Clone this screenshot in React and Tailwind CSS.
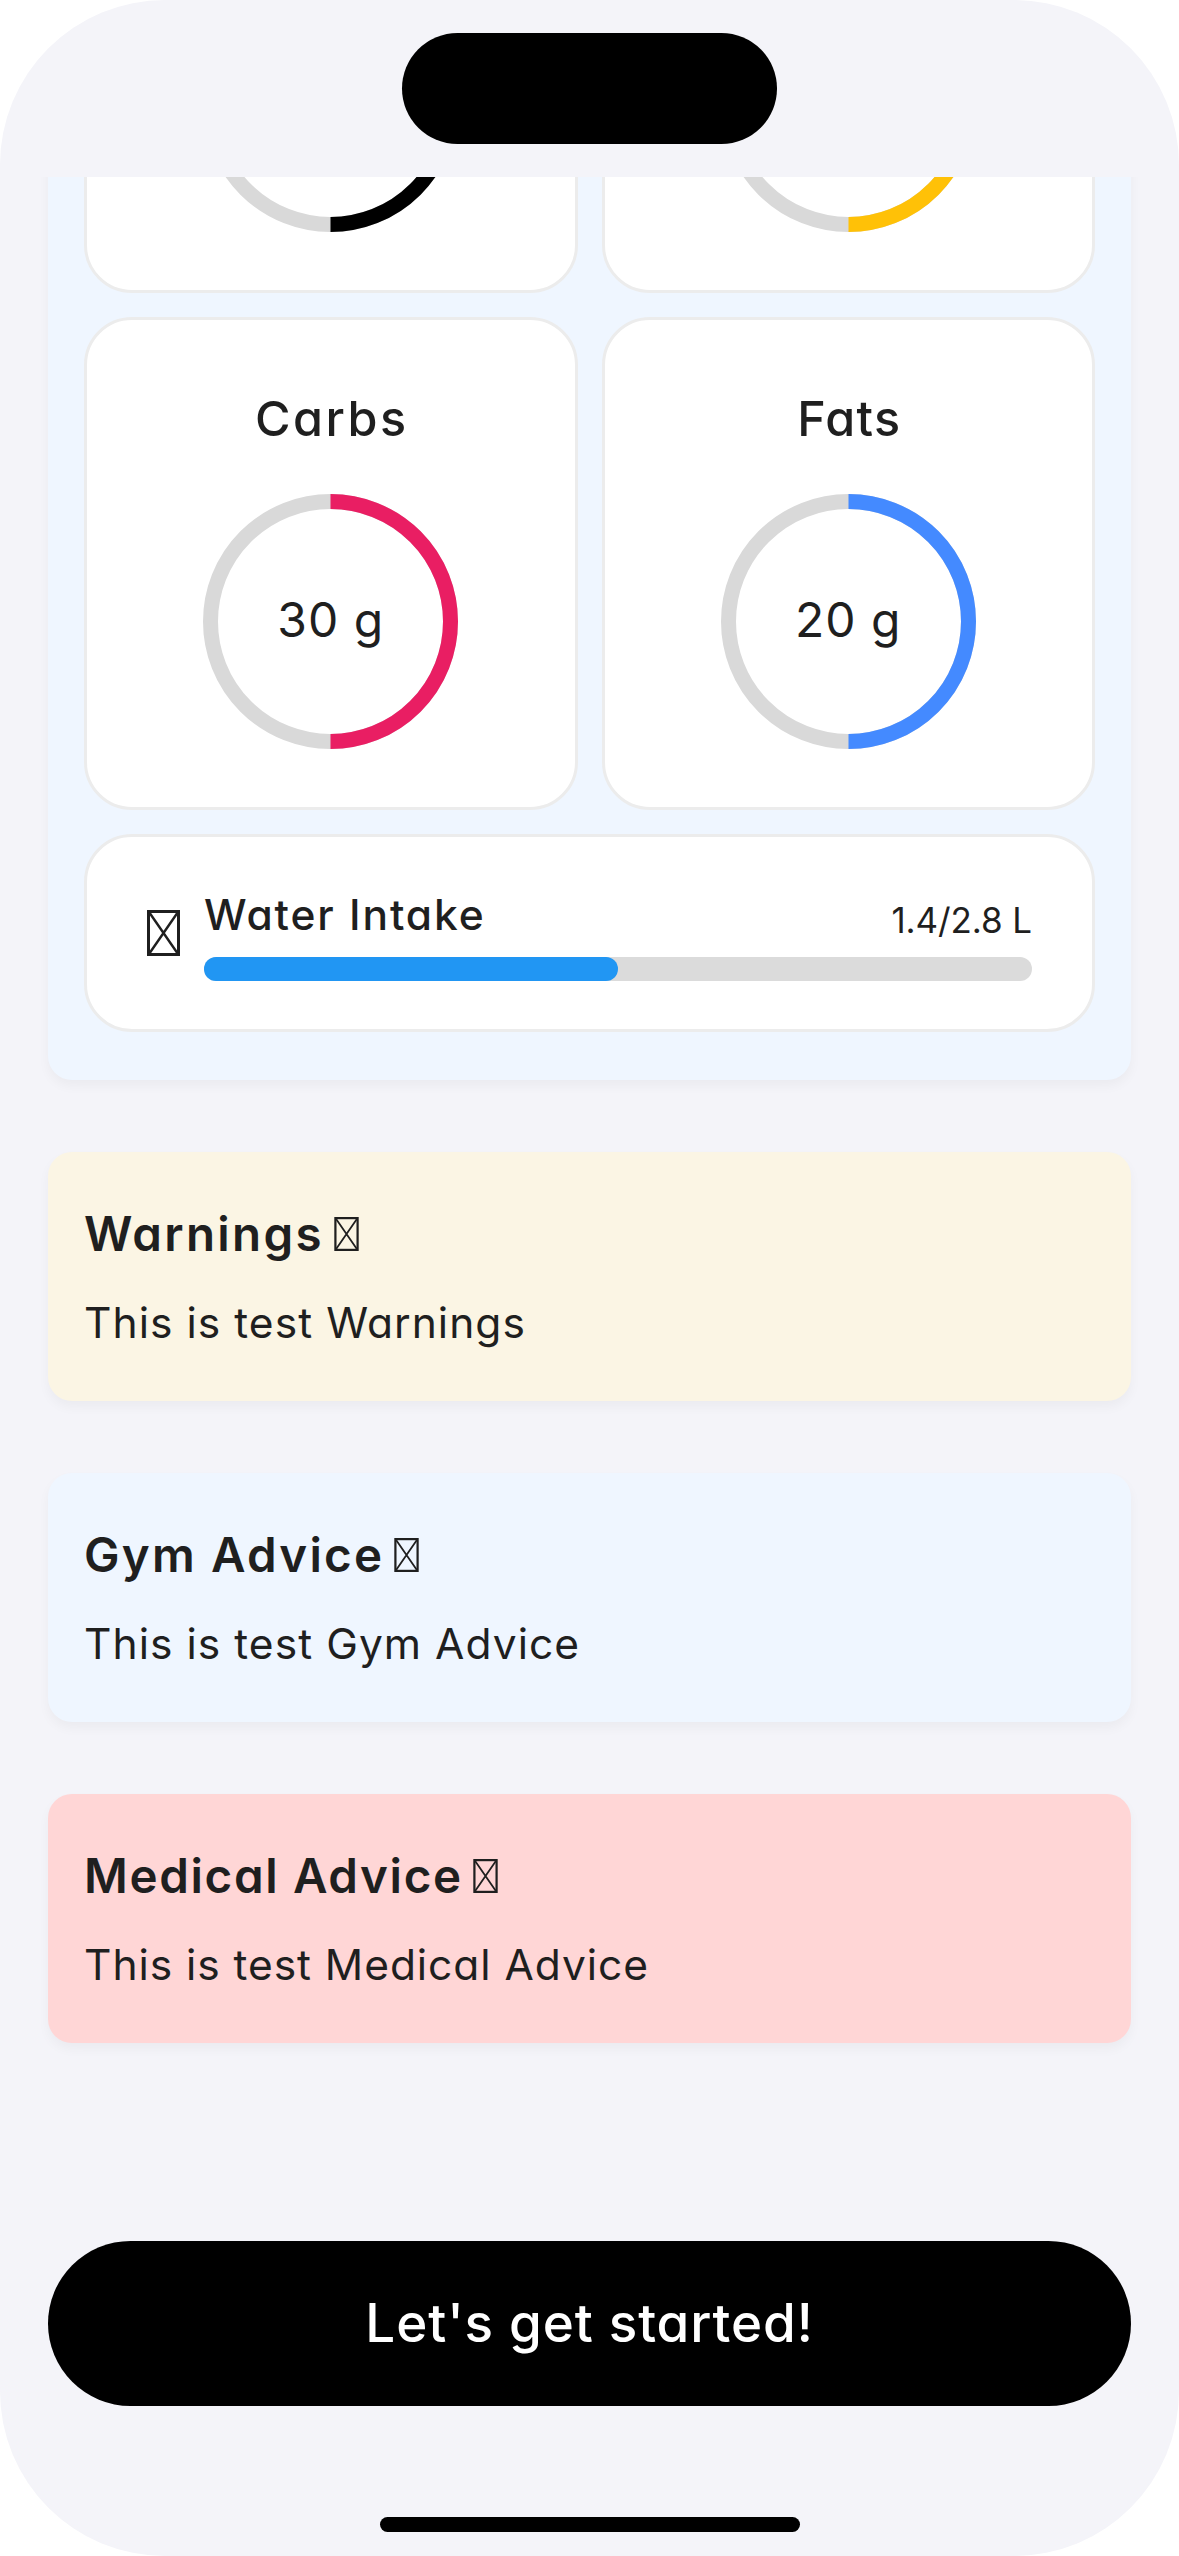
function Ring({ color, children }) {
  return (
    <div className="relative flex size-[255px] items-center justify-center">
      <svg className="absolute inset-0 size-full" viewBox="0 0 255 255" fill="none" strokeWidth="15">
        <circle cx="127.5" cy="127.5" r="120" stroke="#d9d9d9" />
        <path d="M127.5 7.5a120 120 0 0 1 0 240" stroke={color} />
      </svg>
      {children && (
        <span className="relative pb-[3px] text-[48px] leading-none font-normal tracking-[1px]">{children}</span>
      )}
    </div>
  );
}

function MacroCard({ title, tracking, value, color }) {
  return (
    <div className="flex h-[493.5px] flex-col items-center justify-end rounded-[48px] border-[3px] border-[#ececec] bg-white pb-[58px]">
      {title && <h3 className={`pl-[2px] text-[48.5px] leading-[72px] font-medium ${tracking}`}>{title}</h3>}
      <div className="mt-[39.5px]">
        <Ring color={color}>{value}</Ring>
      </div>
    </div>
  );
}

// Empty glyph box shown in place of an emoji
function GlyphBox({ className }) {
  return (
    <svg className={className} viewBox="0 0 33 46" fill="none" stroke="currentColor">
      <rect x="1.5" y="1.5" width="30" height="43" strokeWidth="3" />
      <path d="M2 2l29 42M31 2L2 44" strokeWidth="2.4" />
    </svg>
  );
}

function AdviceCard({ title, text, bg, titleTracking, textTracking }) {
  return (
    <section className={`h-[249px] rounded-3xl px-9 pt-[46px] shadow-[0_6px_12px_rgba(0,0,0,0.04)] ${bg}`}>
      <h2 className="flex h-[72px] items-center">
        <span className={`text-[47.5px] leading-[72px] font-semibold ${titleTracking}`}>{title}</span>
        <GlyphBox className="ml-[10px] h-[34px] w-[25px]" />
      </h2>
      <p className={`mt-[21px] text-[42.5px] leading-[63px] font-normal ${textTracking}`}>{text}</p>
    </section>
  );
}

export default function App() {
  return (
    <div className="h-[2556px] w-[1179px] bg-white">
      <div className="flex h-full flex-col overflow-hidden rounded-[165px] bg-[#f4f4f9] font-['Inter',sans-serif] whitespace-nowrap text-[#1f1f1f] [font-feature-settings:'cv11']">
        <header className="flex h-[177px] shrink-0 justify-center pt-[33px]">
          <div className="h-[111px] w-[375px] rounded-full bg-black" />
        </header>

        <main className="h-[2064px] shrink-0 overflow-hidden px-12">
          <section className="-mt-[414px] rounded-3xl bg-[#eff6ff] px-9 pt-9 pb-12 shadow-[0_6px_12px_rgba(0,0,0,0.04)]">
            <div className="grid grid-cols-2 gap-6">
              <MacroCard color="#000000" />
              <MacroCard color="#ffc107" />
              <MacroCard title="Carbs" tracking="tracking-[2.5px]" value="30 g" color="#e91e63" />
              <MacroCard title="Fats" tracking="tracking-[1.3px]" value="20 g" color="#448aff" />
            </div>
            <div className="mt-6 flex h-[198px] items-start rounded-[48px] border-[3px] border-[#ececec] bg-white pt-[48px] pr-[60px] pl-[60px]">
              <GlyphBox className="mt-[24.5px] h-[46px] w-[33px]" />
              <div className="ml-6 flex-1">
                <div className="flex h-[60px] justify-between">
                  <span className="text-[42.5px] leading-[60px] font-medium tracking-[1.9px]">Water Intake</span>
                  <span className="pt-[5px] text-[35px] leading-[60px] font-normal tracking-[-0.1px]">1.4/2.8 L</span>
                </div>
                <div className="mt-3 h-6 rounded-full bg-[#dbdbdb]">
                  <div className="h-full w-1/2 rounded-full bg-[#2196f3]" />
                </div>
              </div>
            </div>
          </section>

          <div className="mt-[72px] flex flex-col gap-[72px]">
            <AdviceCard
              title="Warnings"
              text="This is test Warnings"
              bg="bg-[#fbf5e4]"
              titleTracking="tracking-[2.3px]"
              textTracking="tracking-[1.05px]"
            />
            <AdviceCard
              title="Gym Advice"
              text="This is test Gym Advice"
              bg="bg-[#eff6ff]"
              titleTracking="tracking-[2.2px]"
              textTracking="tracking-[1.05px]"
            />
            <AdviceCard
              title="Medical Advice"
              text="This is test Medical Advice"
              bg="bg-[#ffd6d6]"
              titleTracking="tracking-[1.65px]"
              textTracking="tracking-[0.95px]"
            />
          </div>
        </main>

        <footer className="flex h-[315px] shrink-0 flex-col items-center px-12">
          <button className="h-[165px] w-full rounded-full bg-black pb-[1px] text-[53px] leading-none font-medium tracking-[0.9px] text-white">
            Let's get started!
          </button>
          <div className="mt-[111px] h-[15px] w-[420px] rounded-full bg-black" />
        </footer>
      </div>
    </div>
  );
}
